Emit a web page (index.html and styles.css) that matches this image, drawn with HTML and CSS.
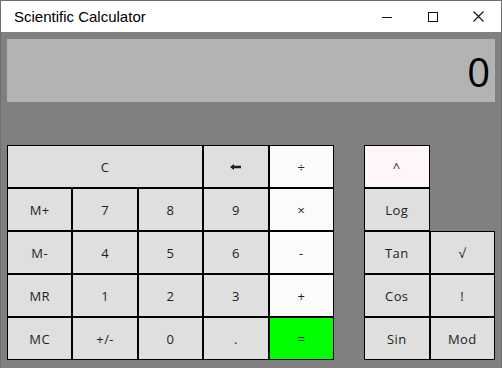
FILE: index.html
```html
<!DOCTYPE html>
<html>
<head>
<meta charset="utf-8">
<link rel="stylesheet" href="styles.css">
</head>
<body>
<div class="window">
  <div class="titlebar">
    <span class="title">Scientific Calculator</span>
    <div class="controls">
      <span class="ctl"><svg width="10" height="10" viewBox="0 0 10 10"><line x1="0" y1="5.5" x2="10" y2="5.5" stroke="#111" stroke-width="1"/></svg></span>
      <span class="ctl"><svg width="10" height="10" viewBox="0 0 10 10"><rect x="0.5" y="0.5" width="9" height="9" fill="none" stroke="#111" stroke-width="1"/></svg></span>
      <span class="ctl"><svg width="11" height="11" viewBox="0 0 11 11"><path d="M0.5 0.5 L10.5 10.5 M10.5 0.5 L0.5 10.5" stroke="#111" stroke-width="1.1" fill="none"/></svg></span>
    </div>
  </div>
  <div class="content">
    <div class="display"><span class="value">0</span></div>
    <div class="keypad">
      <div class="grid main">
        <button class="key span3">C</button>
        <button class="key back" aria-label="Backspace"><svg width="11" height="6" viewBox="0 0 11 6"><path d="M0 3 L4 0 L4 1.8 L11 1.8 L11 4.2 L4 4.2 L4 6 Z" fill="#1e1e1e"/></svg></button>
        <button class="key op">&#xF7;</button>
        <button class="key">M+</button>
        <button class="key">7</button>
        <button class="key">8</button>
        <button class="key">9</button>
        <button class="key op">&#xD7;</button>
        <button class="key">M-</button>
        <button class="key">4</button>
        <button class="key">5</button>
        <button class="key">6</button>
        <button class="key op">-</button>
        <button class="key">MR</button>
        <button class="key">1</button>
        <button class="key">2</button>
        <button class="key">3</button>
        <button class="key op">+</button>
        <button class="key">MC</button>
        <button class="key">+/-</button>
        <button class="key">0</button>
        <button class="key">.</button>
        <button class="key eq">=</button>
      </div>
      <div class="grid sci">
        <button class="key pow">^</button>
        <div class="empty"></div>
        <button class="key">Log</button>
        <div class="empty"></div>
        <button class="key">Tan</button>
        <button class="key">&#x221A;</button>
        <button class="key">Cos</button>
        <button class="key">!</button>
        <button class="key">Sin</button>
        <button class="key">Mod</button>
      </div>
    </div>
  </div>
</div>
</body>
</html>
```

FILE: styles.css
```css
html, body {
  margin: 0;
  padding: 0;
}
body {
  width: 502px;
  height: 368px;
  overflow: hidden;
  background: #808080;
}
.window {
  width: 502px;
  height: 368px;
  box-sizing: border-box;
  border: 1px solid #6e6e6e;
  border-bottom: none;
  display: flex;
  flex-direction: column;
}
.titlebar {
  height: 31px;
  background: #ffffff;
  display: flex;
  align-items: center;
  justify-content: space-between;
  flex: none;
}
.title {
  font-family: "Liberation Sans", Arial, sans-serif;
  font-size: 15px;
  color: #000;
  padding-left: 13px;
  padding-bottom: 1px;
}
.controls {
  display: flex;
  height: 100%;
}
.ctl {
  width: 46px;
  display: flex;
  align-items: center;
  justify-content: center;
}
.ctl:last-child {
  width: 45px;
}
.content {
  flex: 1;
  background: #808080;
  padding: 7px 6px 0 6px;
}
.display {
  height: 63px;
  background: #b3b3b3;
  display: flex;
  align-items: center;
  justify-content: flex-end;
  padding-right: 5px;
}
.value {
  font-family: "Open Sans", "Noto Sans", sans-serif;
  font-size: 40px;
  color: #000;
  line-height: 1;
  padding-top: 3px;
}
.keypad {
  margin-top: 43px;
  display: flex;
  gap: 30px;
}
.grid {
  display: grid;
  grid-template-rows: repeat(5, 43px);
}
.main {
  width: 327px;
  grid-template-columns: repeat(5, 1fr);
}
.sci {
  width: 131px;
  grid-template-columns: repeat(2, 1fr);
}
.key {
  margin: 0;
  padding: 0;
  border: 1px solid #000;
  background: #dfdfdf;
  font-family: "Open Sans", "Noto Sans", sans-serif;
  font-size: 13px;
  letter-spacing: 0.4px;
  color: #1e1e1e;
  display: flex;
  align-items: center;
  justify-content: center;
  box-sizing: border-box;
}
.span3 {
  grid-column: span 3;
}
.op {
  background: #fbfbfb;
}
.pow {
  background: #fff7f7;
}
.eq {
  background: #00ff00;
}
.empty {
  background: transparent;
}
```
